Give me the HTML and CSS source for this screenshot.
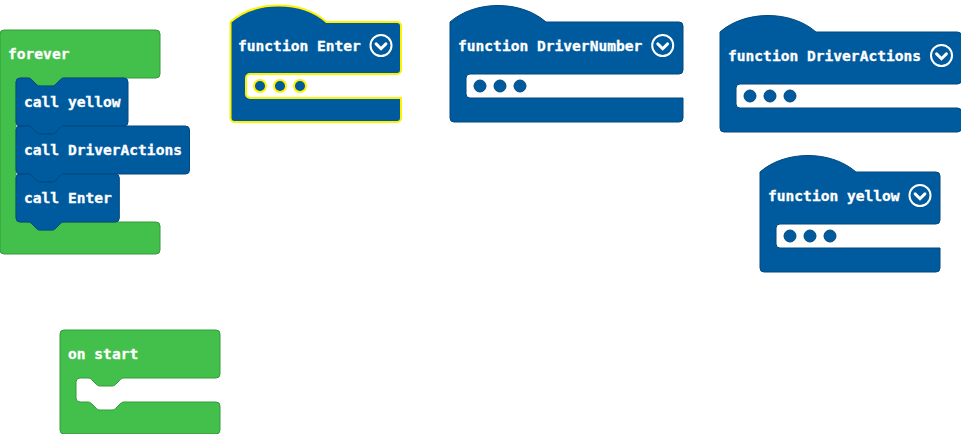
FILE: index.html
```
<!DOCTYPE html>
<html lang="en">
<head>
<meta charset="utf-8">
<title>Blocks workspace</title>
<link rel="stylesheet" href="styles.css">
</head>
<body>
<main class="workspace">
<svg class="canvas" width="961" height="434" viewBox="0 0 961 434">
  <defs>
    <g id="toggle">
      <circle r="10.5"/>
      <path d="M-4.9 -1.6 L0 3.2 L4.9 -1.6" class="chevron"/>
    </g>
    <g id="dots">
      <circle cx="30" cy="64" r="6"/>
      <circle cx="50" cy="64" r="6"/>
      <circle cx="70" cy="64" r="6"/>
    </g>
  </defs>

  <g class="event" transform="translate(0 30)">
    <path d="M0 4 a4 4 0 0 1 4 -4 H156 a4 4 0 0 1 4 4 V44 a4 4 0 0 1 -4 4 H64 c-2 0 -3 1 -4 2 l-4 4 c-1 1 -2 2 -4 2 h-12 c-2 0 -3 -1 -4 -2 l-4 -4 c-1 -1 -2 -2 -4 -2 h-8 a4 4 0 0 0 -4 4 V188 a4 4 0 0 0 4 4 h8 c2 0 3 1 4 2 l4 4 c1 1 2 2 4 2 h12 c2 0 3 -1 4 -2 l4 -4 c1 -1 2 -2 4 -2 H156 a4 4 0 0 1 4 4 V220 a4 4 0 0 1 -4 4 H4 a4 4 0 0 1 -4 -4 Z"/>
    <text x="8" y="29">forever</text>
  </g>
  <g class="function" transform="translate(16 78)">
    <path d="M0 4 a4 4 0 0 1 4 -4 h8 c2 0 3 1 4 2 l4 4 c1 1 2 2 4 2 h12 c2 0 3 -1 4 -2 l4 -4 c1 -1 2 -2 4 -2 H108 a4 4 0 0 1 4 4 V44 a4 4 0 0 1 -4 4 H48 c-2 0 -3 1 -4 2 l-4 4 c-1 1 -2 2 -4 2 h-12 c-2 0 -3 -1 -4 -2 l-4 -4 c-1 -1 -2 -2 -4 -2 H4 a4 4 0 0 1 -4 -4 Z"/>
    <text x="8" y="29">call yellow</text>
  </g>
  <g class="function" transform="translate(16 126)">
    <path d="M0 4 a4 4 0 0 1 4 -4 h8 c2 0 3 1 4 2 l4 4 c1 1 2 2 4 2 h12 c2 0 3 -1 4 -2 l4 -4 c1 -1 2 -2 4 -2 H169.5 a4 4 0 0 1 4 4 V44 a4 4 0 0 1 -4 4 H48 c-2 0 -3 1 -4 2 l-4 4 c-1 1 -2 2 -4 2 h-12 c-2 0 -3 -1 -4 -2 l-4 -4 c-1 -1 -2 -2 -4 -2 H4 a4 4 0 0 1 -4 -4 Z"/>
    <text x="8" y="29">call DriverActions</text>
  </g>
  <g class="function" transform="translate(16 174)">
    <path d="M0 4 a4 4 0 0 1 4 -4 h8 c2 0 3 1 4 2 l4 4 c1 1 2 2 4 2 h12 c2 0 3 -1 4 -2 l4 -4 c1 -1 2 -2 4 -2 H99.3 a4 4 0 0 1 4 4 V44 a4 4 0 0 1 -4 4 H48 c-2 0 -3 1 -4 2 l-4 4 c-1 1 -2 2 -4 2 h-12 c-2 0 -3 -1 -4 -2 l-4 -4 c-1 -1 -2 -2 -4 -2 H4 a4 4 0 0 1 -4 -4 Z"/>
    <text x="8" y="29">call Enter</text>
  </g>

  <g class="event" transform="translate(60 330)">
    <path d="M0 4 a4 4 0 0 1 4 -4 H156 a4 4 0 0 1 4 4 V44 a4 4 0 0 1 -4 4 H64 c-2 0 -3 1 -4 2 l-4 4 c-1 1 -2 2 -4 2 h-12 c-2 0 -3 -1 -4 -2 l-4 -4 c-1 -1 -2 -2 -4 -2 h-8 a4 4 0 0 0 -4 4 V68 a4 4 0 0 0 4 4 h8 c2 0 3 1 4 2 l4 4 c1 1 2 2 4 2 h12 c2 0 3 -1 4 -2 l4 -4 c1 -1 2 -2 4 -2 H156 a4 4 0 0 1 4 4 V100 a4 4 0 0 1 -4 4 H4 a4 4 0 0 1 -4 -4 Z"/>
    <text x="8" y="29">on start</text>
  </g>

  <g class="function selected" transform="translate(230 22)">
    <path d="M0.5 0 c25 -22 71 -22 96 0 H167 a4 4 0 0 1 4 4 V48 a4 4 0 0 1 -4 4 H20 a4 4 0 0 0 -4 4 V72 a4 4 0 0 0 4 4 H171 V96 a4 4 0 0 1 -4 4 H4.5 a4 4 0 0 1 -4 -4 Z"/>
    <use href="#dots"/>
    <text x="8" y="29">function Enter</text>
    <use href="#toggle" class="toggle" x="151" y="23.5"/>
  </g>
  <g class="function" transform="translate(450 22)">
    <path d="M0 0 c25 -22 71 -22 96 0 H229 a4 4 0 0 1 4 4 V48 a4 4 0 0 1 -4 4 H20 a4 4 0 0 0 -4 4 V72 a4 4 0 0 0 4 4 H233 V96 a4 4 0 0 1 -4 4 H4 a4 4 0 0 1 -4 -4 Z"/>
    <use href="#dots"/>
    <text x="8" y="29">function DriverNumber</text>
    <use href="#toggle" class="toggle" x="212.7" y="23.5"/>
  </g>
  <g class="function" transform="translate(720 32)">
    <path d="M0 0 c25 -22 71 -22 96 0 H237.5 a4 4 0 0 1 4 4 V48 a4 4 0 0 1 -4 4 H20 a4 4 0 0 0 -4 4 V72 a4 4 0 0 0 4 4 H237.5 a4 4 0 0 1 4 4 V96 a4 4 0 0 1 -4 4 H4 a4 4 0 0 1 -4 -4 Z"/>
    <use href="#dots"/>
    <text x="8" y="29">function DriverActions</text>
    <use href="#toggle" class="toggle" x="221.5" y="23.5"/>
  </g>
  <g class="function" transform="translate(760 172)">
    <path d="M0 0 c25 -22 71 -22 96 0 H176 a4 4 0 0 1 4 4 V48 a4 4 0 0 1 -4 4 H20 a4 4 0 0 0 -4 4 V72 a4 4 0 0 0 4 4 H180 V96 a4 4 0 0 1 -4 4 H4 a4 4 0 0 1 -4 -4 Z"/>
    <use href="#dots"/>
    <text x="8" y="29">function yellow</text>
    <use href="#toggle" class="toggle" x="160" y="23.5"/>
  </g>
</svg>
</main>
</body>
</html>
```
FILE: styles.css
```
body {
  margin: 0;
  background: #fff;
}
.workspace {
  width: 961px;
  height: 434px;
  overflow: hidden;
}
.canvas {
  display: block;
}
.event {
  fill: #42c04b;
  stroke: #359a3c;
}
.function {
  fill: #005a9e;
  stroke: #00487e;
}
.selected {
  stroke: #fff200;
  stroke-width: 2;
}
.canvas text {
  fill: #fff;
  stroke: #fff;
  stroke-width: 0.3px;
  font: bold 13.4px "DejaVu Sans Mono", monospace;
  white-space: pre;
  transform: scaleX(1.088);
  transform-origin: 8px 29px;
}
.toggle {
  fill: none;
  stroke: #fff;
  stroke-width: 2;
}
.chevron {
  stroke-width: 3;
  stroke-linecap: round;
}
```
